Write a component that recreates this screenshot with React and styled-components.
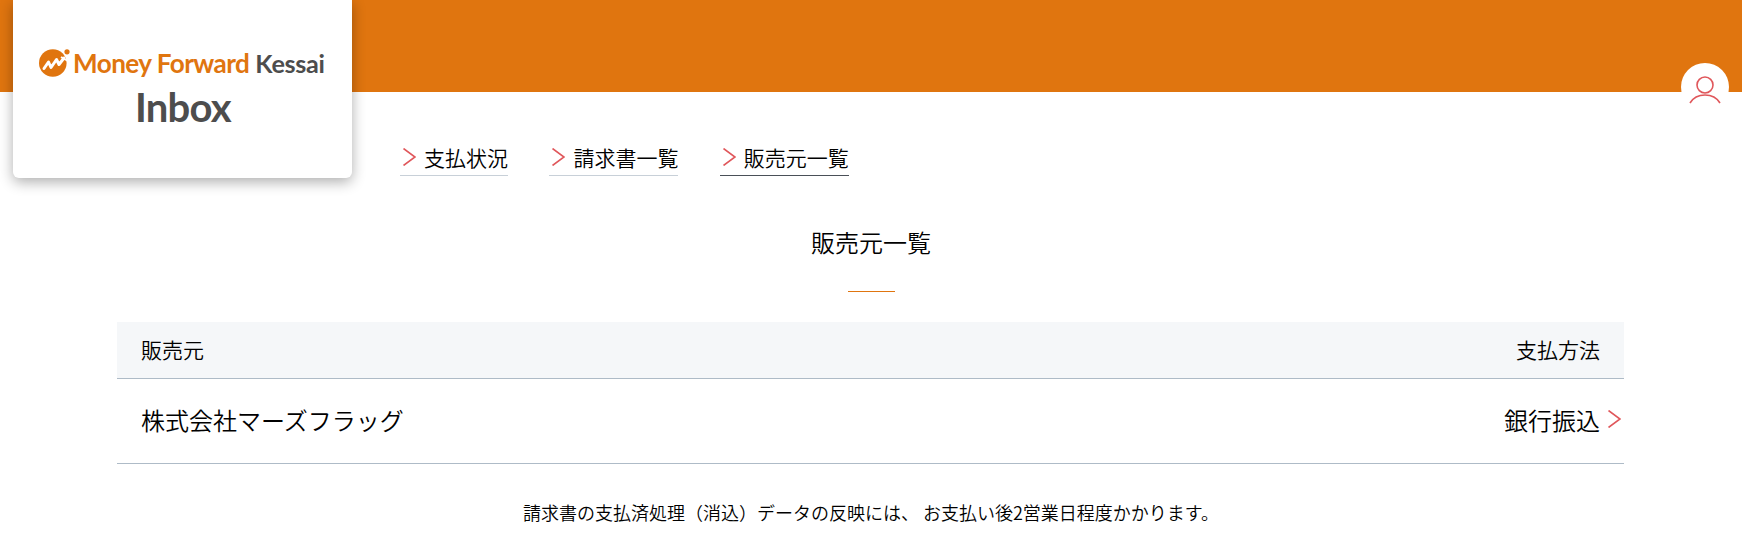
import React from 'react'
import styled, { createGlobalStyle } from 'styled-components'

const colors = {
  orange: '#e0750f',
  red: '#e0575b',
  ink: '#000',
  gray: '#4d4d4d',
  line: '#aebbc7',
  lineLight: '#c8d0d8',
  lineActive: '#4a5058',
  head: '#f5f7f9',
}

const GlobalStyle = createGlobalStyle`
  html, body {
    margin: 0;
    padding: 0;
    background: #fff;
    overflow: hidden;
  }
  body {
    font-family: "Noto Sans CJK JP", "Noto Sans", sans-serif;
    font-weight: 350;
    color: ${colors.ink};
  }
`

function Chevron({ className }) {
  return (
    <svg className={className} viewBox="0 0 13 18" fill="none" stroke={colors.red} strokeWidth="1.6">
      <path d="M0.500 0.500l11.500 8.500L0.500 17.500" />
    </svg>
  )
}

function LogoMark() {
  return (
    <MarkSvg viewBox="0 0 31 28">
      <circle cx="13.800" cy="14" r="13.800" fill={colors.orange} />
      <path
        d="M5 19.500l4.500-6.500 2.500 5.500 5.500-8 2.500 5 5-6.500"
        fill="none"
        stroke="#fff"
        strokeWidth="3"
        strokeLinejoin="round"
        strokeLinecap="round"
      />
      <path d="M22 8l7 4" fill="none" stroke="#fff" strokeWidth="2" />
      <circle cx="28" cy="2.800" r="2.600" fill={colors.orange} />
    </MarkSvg>
  )
}

function UserIcon() {
  return (
    <svg width="34" height="30" viewBox="0 0 34 30" fill="none" stroke={colors.red} strokeWidth="1.6">
      <circle cx="17" cy="9" r="8" />
      <path d="M2 27c3-5 8.500-8 15-8s12 3 15 8" />
    </svg>
  )
}

const navItems = [
  { label: '支払状況' },
  { label: '請求書一覧' },
  { label: '販売元一覧', active: true },
]

export default function App() {
  return (
    <Page>
      <GlobalStyle />
      <TopBand />
      <LogoCard>
        <Wordmark>
          <LogoMark />
          <Brand>Money Forward</Brand>
          <Product>Kessai</Product>
        </Wordmark>
        <Inbox>Inbox</Inbox>
      </LogoCard>
      <Avatar>
        <UserIcon />
      </Avatar>

      <Nav>
        {navItems.map(item => (
          <NavItem key={item.label} $active={item.active}>
            <NavChevron />
            {item.label}
          </NavItem>
        ))}
      </Nav>

      <Title>販売元一覧</Title>
      <Divider />

      <Table>
        <HeadRow>
          <span>販売元</span>
          <span>支払方法</span>
        </HeadRow>
        <Row>
          <span>株式会社マーズフラッグ</span>
          <RowRight>
            銀行振込
            <RowChevron />
          </RowRight>
        </Row>
      </Table>

      <Note>請求書の支払済処理（消込）データの反映には、 お支払い後2営業日程度かかります。</Note>
    </Page>
  )
}

const Page = styled.div`
  position: relative;
  width: 1742px;
  height: 549px;
  overflow: hidden;
  background: #fff;
`
const TopBand = styled.header`
  height: 92px;
  background: ${colors.orange};
`
const LogoCard = styled.div`
  position: absolute;
  top: 0;
  left: 13px;
  width: 339px;
  height: 178px;
  box-sizing: border-box;
  padding: 48px 0 0 26px;
  background: #fff;
  border-radius: 0 0 6px 6px;
  box-shadow: 0 4px 14px rgba(0, 0, 0, 0.32);
`
const Wordmark = styled.div`
  display: flex;
  align-items: center;
  height: 30px;
  font-family: Lato, sans-serif;
  font-weight: 700;
  white-space: nowrap;
`
const MarkSvg = styled.svg`
  width: 31px;
  height: 28px;
  margin-right: 3px;
`
const Brand = styled.span`
  color: ${colors.orange};
  font-size: 26.1px;
  letter-spacing: -0.55px;
`
const Product = styled.span`
  margin-left: 6px;
  color: ${colors.gray};
  font-size: 25.2px;
  letter-spacing: -0.3px;
`
const Inbox = styled.div`
  margin: 7px 0 0 96px;
  font-family: Lato, sans-serif;
  font-weight: 700;
  font-size: 40px;
  line-height: 44px;
  letter-spacing: -0.8px;
  color: ${colors.gray};
`
const Avatar = styled.div`
  position: absolute;
  top: 63px;
  left: 1681px;
  width: 48px;
  height: 48px;
  border-radius: 50%;
  background: #fff;
  display: flex;
  justify-content: center;
  padding-top: 13px;
  box-sizing: border-box;
`
const Nav = styled.nav`
  display: flex;
  gap: 41.4px;
  margin: 47px 0 0 400px;
`
const NavItem = styled.a`
  display: flex;
  align-items: center;
  height: 36px;
  padding-left: 3px;
  font-size: 21px;
  line-height: 36px;
  border-bottom: 1px solid ${({ $active }) => ($active ? colors.lineActive : colors.lineLight)};
`
const NavChevron = styled(Chevron)`
  width: 13px;
  height: 18px;
  margin-right: 8px;
`
const Title = styled.h1`
  margin: 48px 0 0;
  font-size: 24px;
  font-weight: 350;
  line-height: 36px;
  text-align: center;
`
const Divider = styled.div`
  width: 47px;
  height: 1px;
  margin: 31px auto 0;
  background: ${colors.orange};
`
const Table = styled.section`
  margin: 30px 118px 0 117px;
`
const HeadRow = styled.div`
  display: flex;
  justify-content: space-between;
  align-items: center;
  box-sizing: border-box;
  height: 57px;
  padding: 0 24px 2px;
  background: ${colors.head};
  font-size: 21px;
  border-bottom: 1px solid ${colors.line};
`
const Row = styled.div`
  display: flex;
  justify-content: space-between;
  align-items: center;
  box-sizing: border-box;
  height: 85px;
  padding: 0 3px 4px 24px;
  font-size: 24px;
  border-bottom: 1px solid ${colors.line};
`
const RowRight = styled.span`
  display: flex;
  align-items: center;
`
const RowChevron = styled(Chevron)`
  width: 13px;
  height: 18px;
  margin-left: 8px;
`
const Note = styled.p`
  margin: 35px 0 0;
  font-size: 18px;
  line-height: 26px;
  text-align: center;
`
